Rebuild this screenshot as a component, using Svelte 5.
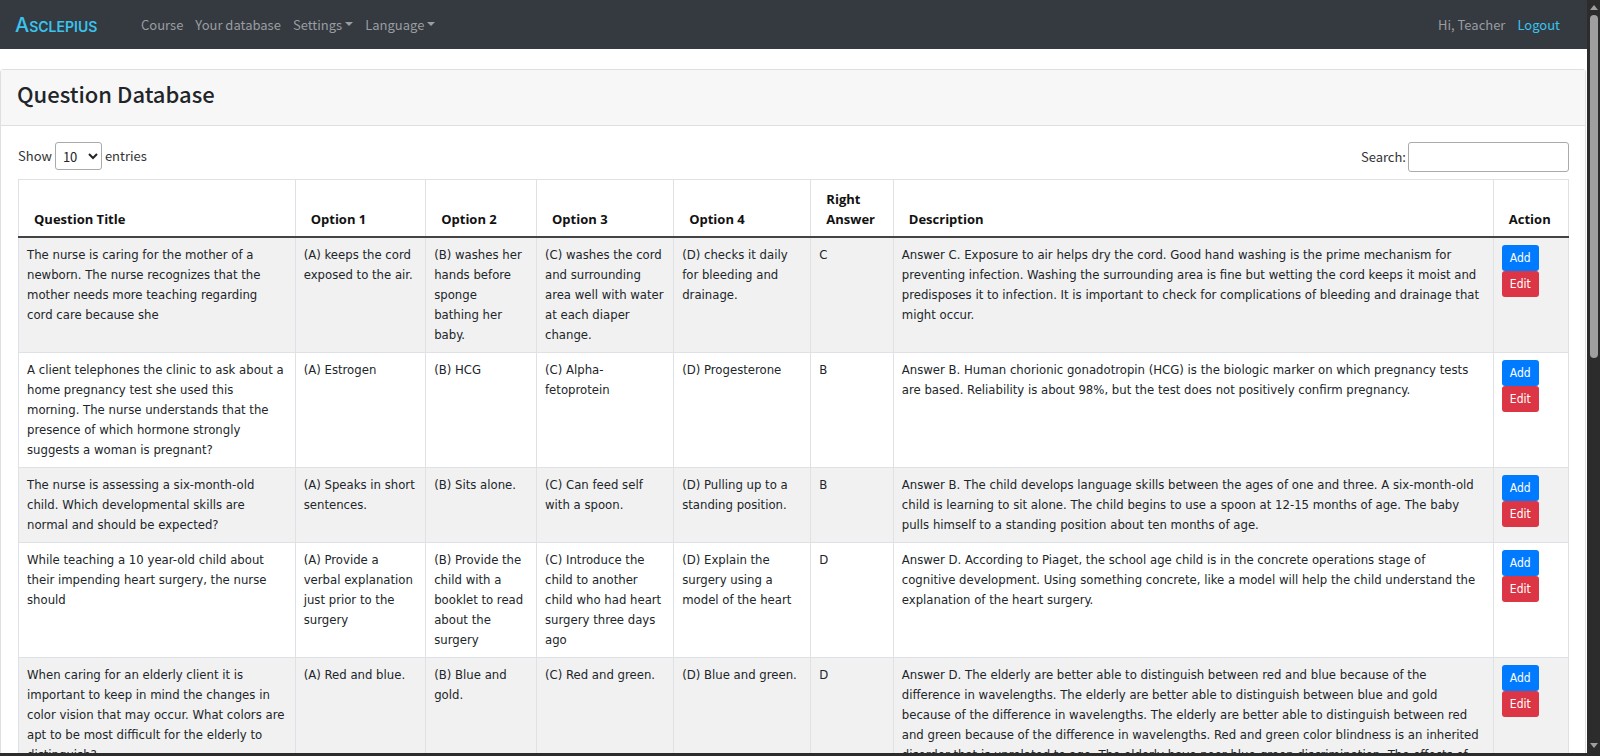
<script>
  // Newlines are kept by the table cells (white-space: pre-line)
  const rows = [
    {
      title: 'The nurse is caring for the mother of a\nnewborn. The nurse recognizes that the\nmother needs more teaching regarding\ncord care because she',
      options: [
        '(A) keeps the cord\nexposed to the air.',
        '(B) washes her\nhands before\nsponge\nbathing her\nbaby.',
        '(C) washes the cord\nand surrounding\narea well with water\nat each diaper\nchange.',
        '(D) checks it daily\nfor bleeding and\ndrainage.'
      ],
      answer: 'C',
      description: 'Answer C. Exposure to air helps dry the cord. Good hand washing is the prime mechanism for\npreventing infection. Washing the surrounding area is fine but wetting the cord keeps it moist and\npredisposes it to infection. It is important to check for complications of bleeding and drainage that\nmight occur.'
    },
    {
      title: 'A client telephones the clinic to ask about a\nhome pregnancy test she used this\nmorning. The nurse understands that the\npresence of which hormone strongly\nsuggests a woman is pregnant?',
      options: ['(A) Estrogen', '(B) HCG', '(C) Alpha-\nfetoprotein', '(D) Progesterone'],
      answer: 'B',
      description: 'Answer B. Human chorionic gonadotropin (HCG) is the biologic marker on which pregnancy tests\nare based. Reliability is about 98%, but the test does not positively confirm pregnancy.'
    },
    {
      title: 'The nurse is assessing a six-month-old\nchild. Which developmental skills are\nnormal and should be expected?',
      options: [
        '(A) Speaks in short\nsentences.',
        '(B) Sits alone.',
        '(C) Can feed self\nwith a spoon.',
        '(D) Pulling up to a\nstanding position.'
      ],
      answer: 'B',
      description: 'Answer B. The child develops language skills between the ages of one and three. A six-month-old\nchild is learning to sit alone. The child begins to use a spoon at 12-15 months of age. The baby\npulls himself to a standing position about ten months of age.'
    },
    {
      title: 'While teaching a 10 year-old child about\ntheir impending heart surgery, the nurse\nshould',
      options: [
        '(A) Provide a\nverbal explanation\njust prior to the\nsurgery',
        '(B) Provide the\nchild with a\nbooklet to read\nabout the\nsurgery',
        '(C) Introduce the\nchild to another\nchild who had heart\nsurgery three days\nago',
        '(D) Explain the\nsurgery using a\nmodel of the heart'
      ],
      answer: 'D',
      description: 'Answer D. According to Piaget, the school age child is in the concrete operations stage of\ncognitive development. Using something concrete, like a model will help the child understand the\nexplanation of the heart surgery.'
    },
    {
      title: 'When caring for an elderly client it is\nimportant to keep in mind the changes in\ncolor vision that may occur. What colors are\napt to be most difficult for the elderly to\ndistinguish?',
      options: ['(A) Red and blue.', '(B) Blue and\ngold.', '(C) Red and green.', '(D) Blue and green.'],
      answer: 'D',
      description: 'Answer D. The elderly are better able to distinguish between red and blue because of the\ndifference in wavelengths. The elderly are better able to distinguish between blue and gold\nbecause of the difference in wavelengths. The elderly are better able to distinguish between red\nand green because of the difference in wavelengths. Red and green color blindness is an inherited\ndisorder that is unrelated to age. The elderly have poor blue-green discrimination. The effects of\nage are greatest on short wavelengths.'
    }
  ];

  let pageSize = 10;
  let search = '';

  $: needle = search.trim().toLowerCase();
  $: visible = rows
    .filter((r) => [r.title, ...r.options, r.description].join(' ').replace(/\n/g, ' ').toLowerCase().includes(needle))
    .slice(0, pageSize);
</script>

<div class="window">
  <div class="page">
    <nav class="navbar">
      <a class="brand" href="/" aria-label="Asclepius">
        <span class="brand-cap">A</span><span>SCLEPIUS</span>
      </a>
      <div class="nav-links">
        <a href="#course">Course</a>
        <a href="#database">Your database</a>
        <a class="dropdown" href="#settings">Settings</a>
        <a class="dropdown" href="#language">Language</a>
      </div>
      <div class="nav-user">
        <span>Hi, Teacher</span>
        <a class="logout" href="#logout">Logout</a>
      </div>
    </nav>

    <main class="card">
      <header class="card-header">
        <h1>Question Database</h1>
      </header>
      <div class="card-body">
        <div class="controls">
          <label class="length">
            Show
            <select bind:value={pageSize}>
              <option value={10}>10</option>
              <option value={25}>25</option>
              <option value={50}>50</option>
              <option value={100}>100</option>
            </select>
            entries
          </label>
          <label class="filter">
            Search:
            <input type="search" bind:value={search} />
          </label>
        </div>

        <table>
          <colgroup>
            <col class="w-title" />
            <col class="w-opt1" />
            <col class="w-opt2" />
            <col class="w-opt3" />
            <col class="w-opt4" />
            <col class="w-answer" />
            <col />
            <col class="w-action" />
          </colgroup>
          <thead>
            <tr>
              <th>Question Title</th>
              <th>Option 1</th>
              <th>Option 2</th>
              <th>Option 3</th>
              <th>Option 4</th>
              <th>Right Answer</th>
              <th>Description</th>
              <th>Action</th>
            </tr>
          </thead>
          <tbody>
            {#each visible as row}
              <tr>
                <td>{row.title}</td>
                {#each row.options as option}
                  <td>{option}</td>
                {/each}
                <td>{row.answer}</td>
                <td>{row.description}</td>
                <td>
                  <div class="actions">
                    <button class="btn add" type="button">Add</button>
                    <button class="btn edit" type="button">Edit</button>
                  </div>
                </td>
              </tr>
            {/each}
          </tbody>
        </table>
      </div>
    </main>
  </div>

  <div class="scrollbar" aria-hidden="true">
    <svg width="8" height="5" viewBox="0 0 8 5"><path d="M4 0 8 5H0z" fill="#9f9f9f" /></svg>
    <div class="track"><div class="thumb"></div></div>
    <svg width="8" height="5" viewBox="0 0 8 5"><path d="M0 0h8L4 5z" fill="#9f9f9f" /></svg>
  </div>
</div>

<style>
  :global(body) {
    margin: 0;
    background: #2c2c2c;
  }

  .window {
    display: flex;
    box-sizing: border-box;
    height: 100vh;
    padding-bottom: 3px;
    overflow: hidden;
    font-family: "Segoe UI", "Noto Sans CJK SC", "Noto Sans", sans-serif;
    font-size: 13px;
    line-height: 20px;
    color: #212529;
  }

  .page {
    flex: 1;
    min-width: 0;
    overflow: hidden;
    background: #fff;
  }

  .navbar {
    display: flex;
    align-items: center;
    height: 49px;
    padding: 0 27px 0 15px;
    background: #343a40;
    color: #9a9da0;
  }
  .navbar a {
    color: inherit;
    text-decoration: none;
  }
  .navbar .brand {
    display: flex;
    align-items: baseline;
    width: 126px;
    padding-top: 2px;
    font-family: Inter, "Liberation Sans", Arial, sans-serif;
    font-size: 14px;
    font-weight: 600;
    color: #38c4ef;
  }
  .brand-cap {
    font-size: 20px;
    font-weight: 500;
  }
  .nav-links {
    display: flex;
    gap: 12px;
  }
  .dropdown::after {
    content: "";
    display: inline-block;
    margin-left: 3px;
    vertical-align: 4px;
    border-top: 4px solid;
    border-right: 4px solid transparent;
    border-left: 4px solid transparent;
  }
  .nav-user {
    display: flex;
    gap: 12px;
    margin-left: auto;
  }
  .navbar .logout {
    color: #38c4ef;
  }

  .card {
    margin: 20px 1px 0 0;
    border: 1px solid #dfdfdf;
    border-radius: 3px;
  }
  .card-header {
    padding: 8px 16px 17px;
    background: #f7f7f7;
    border-bottom: 1px solid #dfdfdf;
  }
  h1 {
    margin: 0;
    font-size: 22px;
    font-weight: 500;
    line-height: 30px;
  }
  .card-body {
    padding: 16px 16px 16px 17px;
  }

  .controls {
    display: flex;
    justify-content: space-between;
    align-items: flex-start;
    margin-bottom: 7px;
    color: #333;
  }
  label {
    display: flex;
    align-items: center;
    gap: 3px;
  }
  .filter {
    gap: 2px;
  }
  select,
  input {
    box-sizing: border-box;
    border: 1px solid #aaa;
    border-radius: 3px;
    background: #fff;
    font: inherit;
    color: #212529;
  }
  select {
    width: 47px;
    height: 28px;
    padding: 0 0 0 3px;
  }
  input {
    width: 161px;
    height: 30px;
    padding: 4px;
  }

  table {
    width: 100%;
    table-layout: fixed;
    border-collapse: collapse;
    border: 1px solid #dee2e6;
  }
  .w-title { width: 17.85%; }
  .w-opt1 { width: 8.42%; }
  .w-opt2 { width: 7.15%; }
  .w-opt3 { width: 8.85%; }
  .w-opt4 { width: 8.85%; }
  .w-answer { width: 5.32%; }
  .w-action { width: 4.85%; }

  th,
  td {
    border: 1px solid #dee2e6;
    vertical-align: top;
    text-align: left;
  }
  th {
    padding: 9px 8px 7px 15px;
    border-bottom: 2px solid #444;
    vertical-align: bottom;
    font-family: "Segoe UI", "Open Sans", sans-serif;
    font-weight: bold;
    color: #111;
  }
  td {
    padding: 7px 0 7px 8px;
    white-space: pre-line;
  }
  tbody {
    font-family: "Segoe UI", "DejaVu Sans Condensed", "DejaVu Sans", sans-serif;
  }
  tbody tr:nth-child(odd) {
    background: #f1f1f1;
  }

  .actions {
    display: flex;
    flex-direction: column;
    align-items: flex-start;
  }
  .btn {
    height: 26px;
    padding: 0 8px;
    border: 0;
    border-radius: 3px;
    font: inherit;
    font-size: 12px;
    color: #fff;
    cursor: pointer;
  }
  .add {
    background: #007bff;
  }
  .edit {
    background: #dc3545;
  }

  .scrollbar {
    display: flex;
    flex-direction: column;
    align-items: center;
    width: 13px;
    padding: 5px 0;
    box-sizing: border-box;
    background: #2c2c2c;
  }
  .track {
    flex: 1;
    width: 8px;
    margin: 5px 0;
  }
  .thumb {
    height: 47.5%;
    border-radius: 4px;
    background: #9f9f9f;
  }
</style>
